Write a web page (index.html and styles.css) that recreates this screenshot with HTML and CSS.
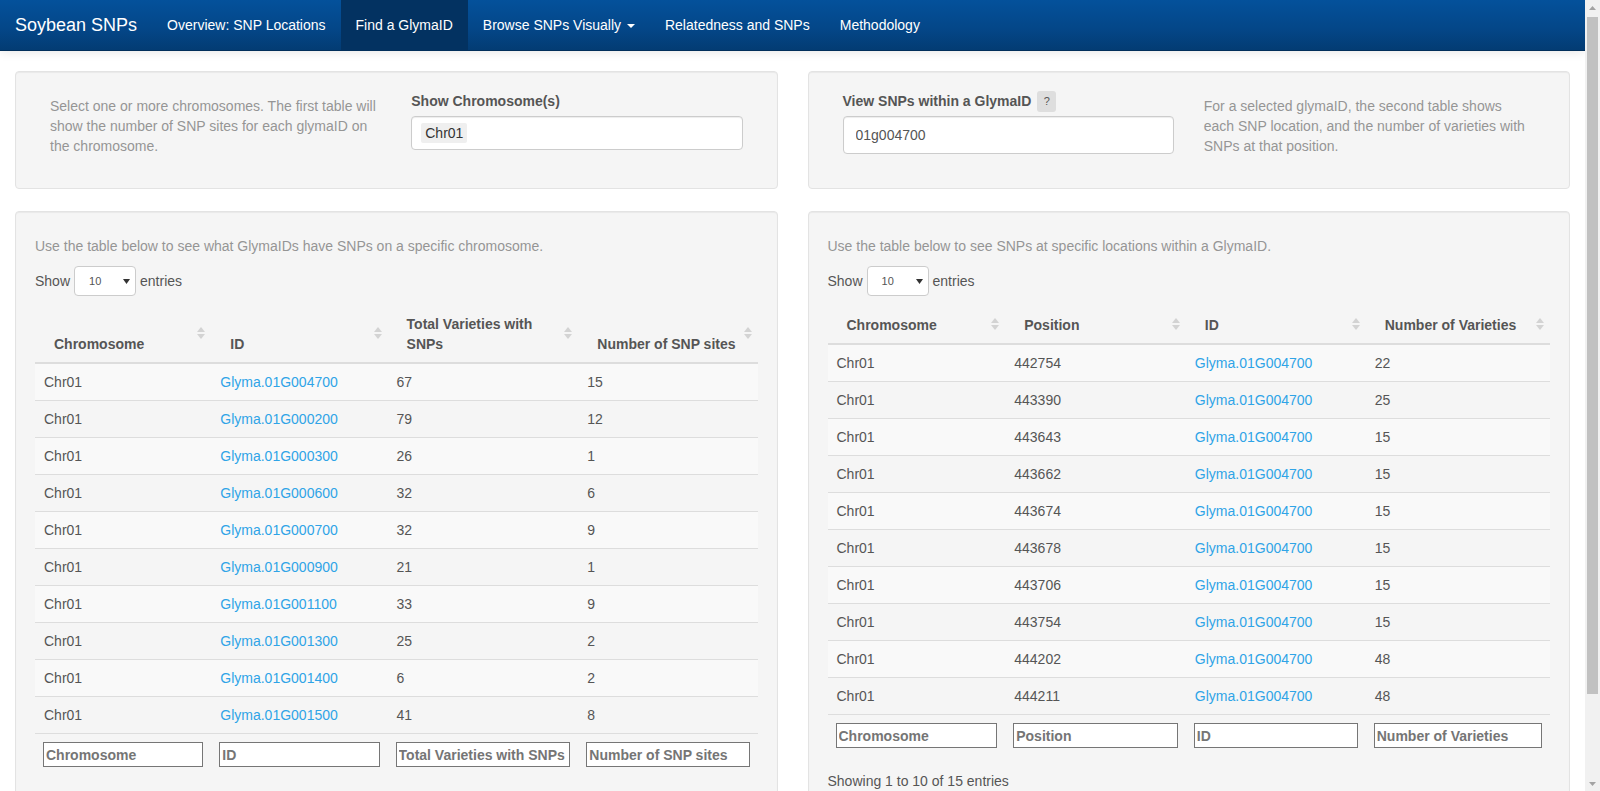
FILE: index.html
```html
<!DOCTYPE html>
<html lang="en">
<head>
<meta charset="utf-8">
<title>Soybean SNPs</title>
<link rel="stylesheet" href="styles.css">
</head>
<body>
<div class="page">
  <nav class="navbar">
    <div class="navbar-inner">
      <a class="brand" href="#">Soybean SNPs</a>
      <ul class="nav">
        <li><a href="#">Overview: SNP Locations</a></li>
        <li class="active"><a href="#">Find a GlymaID</a></li>
        <li><a href="#">Browse SNPs Visually <span class="caret"></span></a></li>
        <li><a href="#">Relatedness and SNPs</a></li>
        <li><a href="#">Methodology</a></li>
      </ul>
    </div>
  </nav>

  <div class="container">
    <div class="grid">
      <!-- LEFT COLUMN -->
      <div class="col">
        <div class="well well-top">
          <div class="half">
            <span class="help-block">Select one or more chromosomes. The first table will show the number of SNP sites for each glymaID on the chromosome.</span>
          </div>
          <div class="half">
            <div class="form-group">
              <label class="control-label">Show Chromosome(s)</label>
              <div class="selectize-control">
                <div class="selectize-input"><span class="item">Chr01</span></div>
              </div>
            </div>
          </div>
        </div>

        <div class="well well-table">
          <span class="help-block">Use the table below to see what GlymaIDs have SNPs on a specific chromosome.</span>
          <div class="dt-length">
            <span>Show</span>
            <span class="select-box"><span>10</span><svg width="7" height="5" viewBox="0 0 7 5"><path d="M0 0h7L3.5 5z" fill="#333"/></svg></span>
            <span>entries</span>
          </div>
          <table class="dt">
            <colgroup>
              <col class="c-l1"><col class="c-l2"><col class="c-l3"><col class="c-l4">
            </colgroup>
            <thead>
              <tr>
                <th class="sorting">Chromosome</th>
                <th class="sorting">ID</th>
                <th class="sorting">Total Varieties with SNPs</th>
                <th class="sorting">Number of SNP sites</th>
              </tr>
            </thead>
            <tbody>
              <tr><td>Chr01</td><td><a href="#">Glyma.01G004700</a></td><td>67</td><td>15</td></tr>
              <tr><td>Chr01</td><td><a href="#">Glyma.01G000200</a></td><td>79</td><td>12</td></tr>
              <tr><td>Chr01</td><td><a href="#">Glyma.01G000300</a></td><td>26</td><td>1</td></tr>
              <tr><td>Chr01</td><td><a href="#">Glyma.01G000600</a></td><td>32</td><td>6</td></tr>
              <tr><td>Chr01</td><td><a href="#">Glyma.01G000700</a></td><td>32</td><td>9</td></tr>
              <tr><td>Chr01</td><td><a href="#">Glyma.01G000900</a></td><td>21</td><td>1</td></tr>
              <tr><td>Chr01</td><td><a href="#">Glyma.01G001100</a></td><td>33</td><td>9</td></tr>
              <tr><td>Chr01</td><td><a href="#">Glyma.01G001300</a></td><td>25</td><td>2</td></tr>
              <tr><td>Chr01</td><td><a href="#">Glyma.01G001400</a></td><td>6</td><td>2</td></tr>
              <tr><td>Chr01</td><td><a href="#">Glyma.01G001500</a></td><td>41</td><td>8</td></tr>
            </tbody>
            <tfoot>
              <tr>
                <td><input type="text" placeholder="Chromosome"></td>
                <td><input type="text" placeholder="ID"></td>
                <td><input type="text" placeholder="Total Varieties with SNPs"></td>
                <td><input type="text" placeholder="Number of SNP sites"></td>
              </tr>
            </tfoot>
          </table>
        </div>
      </div>

      <!-- RIGHT COLUMN -->
      <div class="col">
        <div class="well well-top">
          <div class="half">
            <div class="form-group">
              <label class="control-label">View SNPs within a GlymaID <span class="q-badge">?</span></label>
              <input class="form-control" type="text" value="01g004700">
            </div>
          </div>
          <div class="half">
            <span class="help-block">For a selected glymaID, the second table shows each SNP location, and the number of varieties with SNPs at that position.</span>
          </div>
        </div>

        <div class="well well-table">
          <span class="help-block">Use the table below to see SNPs at specific locations within a GlymaID.</span>
          <div class="dt-length">
            <span>Show</span>
            <span class="select-box"><span>10</span><svg width="7" height="5" viewBox="0 0 7 5"><path d="M0 0h7L3.5 5z" fill="#333"/></svg></span>
            <span>entries</span>
          </div>
          <table class="dt dt-right">
            <colgroup>
              <col class="c-r1"><col class="c-r2"><col class="c-r3"><col class="c-r4">
            </colgroup>
            <thead>
              <tr>
                <th class="sorting">Chromosome</th>
                <th class="sorting">Position</th>
                <th class="sorting">ID</th>
                <th class="sorting">Number of Varieties</th>
              </tr>
            </thead>
            <tbody>
              <tr><td>Chr01</td><td>442754</td><td><a href="#">Glyma.01G004700</a></td><td>22</td></tr>
              <tr><td>Chr01</td><td>443390</td><td><a href="#">Glyma.01G004700</a></td><td>25</td></tr>
              <tr><td>Chr01</td><td>443643</td><td><a href="#">Glyma.01G004700</a></td><td>15</td></tr>
              <tr><td>Chr01</td><td>443662</td><td><a href="#">Glyma.01G004700</a></td><td>15</td></tr>
              <tr><td>Chr01</td><td>443674</td><td><a href="#">Glyma.01G004700</a></td><td>15</td></tr>
              <tr><td>Chr01</td><td>443678</td><td><a href="#">Glyma.01G004700</a></td><td>15</td></tr>
              <tr><td>Chr01</td><td>443706</td><td><a href="#">Glyma.01G004700</a></td><td>15</td></tr>
              <tr><td>Chr01</td><td>443754</td><td><a href="#">Glyma.01G004700</a></td><td>15</td></tr>
              <tr><td>Chr01</td><td>444202</td><td><a href="#">Glyma.01G004700</a></td><td>48</td></tr>
              <tr><td>Chr01</td><td>444211</td><td><a href="#">Glyma.01G004700</a></td><td>48</td></tr>
            </tbody>
            <tfoot>
              <tr>
                <td><input type="text" placeholder="Chromosome"></td>
                <td><input type="text" placeholder="Position"></td>
                <td><input type="text" placeholder="ID"></td>
                <td><input type="text" placeholder="Number of Varieties"></td>
              </tr>
            </tfoot>
          </table>
          <div class="dt-info">Showing 1 to 10 of 15 entries</div>
        </div>
      </div>
    </div>
  </div>
</div>

<div class="scrollbar" aria-hidden="true">
  <span class="sb-btn"><svg width="7" height="4" viewBox="0 0 7 4"><path d="M0 4L3.5 0L7 4z" fill="#a3a3a3"/></svg></span>
  <span class="sb-thumb"></span>
  <span class="sb-space"></span>
  <span class="sb-btn"><svg width="7" height="4" viewBox="0 0 7 4"><path d="M0 0h7L3.5 4z" fill="#a3a3a3"/></svg></span>
</div>
</body>
</html>
```

FILE: styles.css
```css
* {
  box-sizing: border-box;
}

html,
body {
  margin: 0;
  padding: 0;
}

body {
  font-family: "Liberation Sans", Arial, Helvetica, sans-serif;
  font-size: 14px;
  line-height: 20px;
  color: #555555;
  background: #ffffff;
  overflow: hidden;
}

a {
  color: #2fa4e7;
  text-decoration: none;
}

.page {
  margin-right: 15px;
}

/* ---------- Fake browser scrollbar ---------- */
.scrollbar {
  position: fixed;
  top: 0;
  right: 0;
  width: 15px;
  height: 100vh;
  display: flex;
  flex-direction: column;
  background: #f1f1f1;
}

.sb-btn {
  display: flex;
  align-items: center;
  justify-content: center;
  height: 15px;
  flex: none;
}

.sb-thumb {
  flex: none;
  height: 677px;
  margin: 2px 2px 0 2px;
  background: #c1c1c1;
}

.sb-space {
  flex: 1;
}

/* ---------- Navbar ---------- */
.navbar {
  height: 51px;
  background-image: linear-gradient(#04519b, #044687 60%, #033c73);
  border-bottom: 1px solid #022f5a;
  box-shadow: 0 1px 10px rgba(0, 0, 0, 0.1);
  margin-bottom: 20px;
}

.navbar-inner {
  display: flex;
  height: 50px;
  padding: 0 15px;
}

.brand {
  display: block;
  font-size: 18px;
  line-height: 20px;
  padding: 15px 15px 15px 0;
  color: #ffffff;
}

.nav {
  display: flex;
  list-style: none;
  margin: 0;
  padding: 0;
}

.nav a {
  display: block;
  padding: 15px;
  line-height: 20px;
  color: #ffffff;
}

.nav .active a {
  background-color: #033261;
}

.caret {
  display: inline-block;
  width: 0;
  height: 0;
  margin-left: 2px;
  vertical-align: middle;
  border-top: 4px solid #ffffff;
  border-left: 4px solid transparent;
  border-right: 4px solid transparent;
}

/* ---------- Layout ---------- */
.container {
  padding: 0 15px;
}

.grid {
  display: grid;
  grid-template-columns: 1fr 1fr;
  column-gap: 30px;
}

.well {
  background-color: #f5f5f5;
  border: 1px solid #e3e3e3;
  border-radius: 4px;
  box-shadow: inset 0 1px 1px rgba(0, 0, 0, 0.05);
  padding: 19px;
  margin-bottom: 20px;
}

.well-top {
  display: flex;
  margin-bottom: 22px;
}

.half {
  width: 50%;
  padding: 0 15px;
}

.help-block {
  display: block;
  margin-top: 5px;
  margin-bottom: 10px;
  color: #959595;
}

.form-group {
  margin-bottom: 15px;
}

.control-label {
  display: inline-block;
  margin-bottom: 5px;
  font-weight: bold;
}

.q-badge {
  display: inline-block;
  margin-left: 2px;
  width: 19px;
  height: 21px;
  line-height: 21px;
  text-align: center;
  vertical-align: top;
  margin-bottom: -1px;
  font-size: 11px;
  font-weight: normal;
  color: #555;
  background: #dedede;
  border-radius: 3px;
}

.selectize-control {
  padding-bottom: 4px;
}

.selectize-input {
  height: 34px;
  padding: 6px 9px;
  background: #ffffff;
  border: 1px solid #cccccc;
  border-radius: 4px;
  box-shadow: inset 0 1px 1px rgba(0, 0, 0, 0.075);
}

.selectize-input .item {
  display: inline-block;
  padding: 0 4px;
  line-height: 20px;
  background: #efefef;
  color: #333;
  border-radius: 2px;
}

.form-control {
  display: block;
  width: 100%;
  height: 38px;
  padding: 8px 12px;
  font-family: inherit;
  font-size: 14px;
  line-height: 20px;
  color: #555555;
  background: #ffffff;
  border: 1px solid #cccccc;
  border-radius: 4px;
  box-shadow: inset 0 1px 1px rgba(0, 0, 0, 0.075);
}

/* ---------- DataTable ---------- */
.well-table {
  padding-bottom: 40px;
}

.dt-length {
  display: flex;
  align-items: center;
  gap: 4px;
  height: 30px;
}

.select-box {
  display: flex;
  align-items: center;
  justify-content: space-between;
  width: 62px;
  height: 30px;
  padding: 0 5px 0 14px;
  font-size: 11px;
  color: #555;
  background: #ffffff;
  border: 1px solid #cccccc;
  border-radius: 4px;
}

.dt {
  width: 100%;
  margin-top: 8px;
  border-collapse: collapse;
  table-layout: fixed;
}

.dt-right {
  margin-top: 9px;
}

.c-l1 { width: 24.4%; }
.c-l2 { width: 24.4%; }
.c-l3 { width: 26.4%; }
.c-l4 { width: 24.8%; }

.c-r1 { width: 24.6%; }
.c-r2 { width: 25%; }
.c-r3 { width: 24.9%; }
.c-r4 { width: 25.5%; }

.dt th {
  position: relative;
  text-align: left;
  font-weight: bold;
  vertical-align: bottom;
  padding: 10px 18px 8px 19px;
  border-bottom: 2px solid #dddddd;
}

.dt th.sorting::before,
.dt th.sorting::after {
  content: "";
  position: absolute;
  right: 6px;
  width: 0;
  height: 0;
  border-left: 4px solid transparent;
  border-right: 4px solid transparent;
}

.dt th.sorting::before {
  top: calc(50% - 6px);
  border-bottom: 5px solid #d3d3d3;
}

.dt th.sorting::after {
  top: calc(50% + 1px);
  border-top: 5px solid #d3d3d3;
}

.dt td {
  padding: 8px 9px;
  border-top: 1px solid #dddddd;
  white-space: nowrap;
}

.dt tbody tr:nth-child(odd) {
  background-color: #f9f9f9;
}

.dt tfoot td {
  padding: 8px 8px 6px 8px;
}

.dt tfoot input {
  display: block;
  width: 100%;
  height: 25px;
  padding: 1px 2px;
  font-family: inherit;
  font-size: 14px;
  font-weight: bold;
  color: #555;
  background: #ffffff;
  border: 1px solid #767676;
  border-radius: 0;
}

.dt tfoot input::placeholder {
  color: #757575;
}

.dt-info {
  padding-top: 17px;
}
```
